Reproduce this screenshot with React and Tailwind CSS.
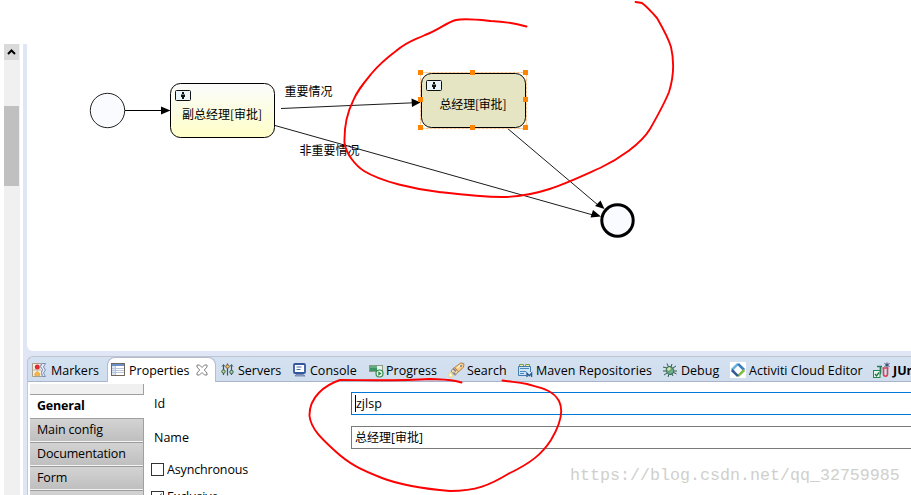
const UI = "font-['Open_Sans','Noto_Sans_CJK_SC',sans-serif]";
const CJK = "'Noto Sans CJK SC', sans-serif";

function MarkersIcon() {
  return (
    <svg width="16" height="16" viewBox="0 0 16 16" className="shrink-0">
      <path d="M1.500 1.500h9l-1 3 2 3-1 3 1 4h-10z" fill="#f6f0e6" stroke="#a9a08c" />
      <path d="M11 1.500h3.500l-2 3.500 2 3-2 3 2 3.500h-3l-1-4 1-3-2-3z" fill="#e3ebf7" stroke="#7b8fb8" />
      <path d="M1.500 8h8.500" stroke="#b9b09c" />
      <circle cx="6.300" cy="5" r="2.500" fill="#e02a34" />
      <path d="M3.800 13.500v-2l2.500-2.300 2.500 2.300v2z" fill="#f7b544" stroke="#d99a35" strokeWidth=".6" />
    </svg>
  );
}
function PropertiesIcon() {
  return (
    <svg width="16" height="16" viewBox="0 0 16 16" className="shrink-0">
      <rect x="1.500" y="1.500" width="13" height="12" fill="#fff" stroke="#71675a" />
      <rect x="2" y="2" width="12" height="2" fill="#6a8fc8" />
      <rect x="2" y="4" width="4" height="9" fill="#dbe6f4" />
      <path d="M2 6.500h12M2 8.500h12M2 10.500h12M5.500 4v9" stroke="#b9c6da" />
    </svg>
  );
}
function CloseIcon() {
  return (
    <svg width="12" height="12" viewBox="0 0 12 12" className="shrink-0">
      <path d="M1 1h2.500L6 3.500 8.500 1H11v2L8.300 6 11 9v2H8.500L6 8.500 3.500 11H1V9l2.700-3L1 3z" fill="#fff" stroke="#737373" strokeWidth=".9" />
    </svg>
  );
}
function ServersIcon() {
  return (
    <svg width="16" height="16" viewBox="0 0 16 16" className="shrink-0">
      <path d="M3.500 3v10M7.500 1.500v12M11.500 3v10" stroke="#3b5062" strokeWidth="1.200" />
      <circle cx="3.500" cy="9.500" r="1.700" fill="#c4d977" stroke="#38614f" />
      <circle cx="7.500" cy="4.500" r="1.700" fill="#f4cf72" stroke="#795d30" />
      <circle cx="11.500" cy="10" r="1.700" fill="#a8dbb0" stroke="#38614f" />
      <path d="M2 4.500l1.500-2L5 4.500M10 4.500l1.500-2L13 4.500" fill="none" stroke="#4f6478" />
    </svg>
  );
}
function ConsoleIcon() {
  return (
    <svg width="16" height="16" viewBox="0 0 16 16" className="shrink-0">
      <rect x="2" y="2" width="11" height="9" rx="1" fill="#fff" stroke="#34569c" strokeWidth="1.800" />
      <path d="M4.500 5h5M4.500 7.500h4" stroke="#4968a8" />
      <path d="M4 12.500h7l2 1.500H3z" fill="#9baacb" stroke="#596e9e" strokeWidth=".7" />
    </svg>
  );
}
function ProgressIcon() {
  return (
    <svg width="16" height="16" viewBox="0 0 16 16" className="shrink-0">
      <rect x="1.500" y="3.500" width="13" height="6" fill="#e9f2e8" stroke="#8c9a88" />
      <rect x="2" y="4" width="7" height="5" fill="#3d9465" />
      <path d="M2 5h7" stroke="#83c79e" />
      <circle cx="11.500" cy="11.500" r="3.500" fill="#e6f6e5" stroke="#2f8a4e" strokeWidth="1.200" />
      <path d="M10.300 9.300l3.200 2.200-3.200 2.200z" fill="#2b8448" />
    </svg>
  );
}
function SearchIcon() {
  return (
    <svg width="17" height="16" viewBox="0 0 17 16" className="shrink-0">
      <path d="M2 10l3 4-3 1.500L.500 13z" fill="#fffbd2" stroke="#e8cb62" strokeWidth=".7" />
      <path d="M3 9l3-3.500 4.500 4-3.500 4z" fill="#f1dfa9" stroke="#8b7861" strokeWidth=".8" />
      <path d="M5 6.500l3 3M5.500 10.500l2 2" stroke="#807f92" strokeWidth="1.600" />
      <path d="M6.500 5.500L13 .800l3 1-.5 3.500-5 4.500z" fill="#f8cb88" stroke="#a57138" strokeWidth=".8" />
      <path d="M9 6l4-3.200" stroke="#fff0bd" strokeWidth="1.500" />
      <circle cx="13" cy="4" r=".9" fill="#5479b4" />
    </svg>
  );
}
function MavenIcon() {
  return (
    <svg width="16" height="16" viewBox="0 0 16 16" className="shrink-0">
      <path d="M2.500 4V2.500h4V4M8.500 4V2.500h4V4" fill="#f4e9a2" stroke="#7a9e52" />
      <path d="M1.500 4.500h12v9h-12z" fill="#cfe4f8" stroke="#417cae" />
      <path d="M3 6.500h9M3 9.500h6M3 11.500h4" stroke="#4a88bb" />
      <rect x="9" y="10" width="7" height="5" fill="#d7e7f5" />
      <path d="M10 15v-3.800l2.300 2.500 2.300-2.500V15" fill="none" stroke="#285a91" strokeWidth="1.400" />
    </svg>
  );
}
function DebugIcon() {
  return (
    <svg width="16" height="16" viewBox="0 0 16 16" className="shrink-0">
      <path d="M1 5l4 1M5 1.500L6.500 5M10 2L9 5M14 4l-3 2M1 9h4M2 13l3-2M6 15l1-3M11 14l-1.500-2.500M15 9h-4M14.500 12L11 10" stroke="#315b50" strokeWidth="1" />
      <ellipse cx="8" cy="8.500" rx="3.600" ry="4" transform="rotate(-35 8 8.500)" fill="#75ad8c" stroke="#326752" />
      <circle cx="7" cy="7" r="1.800" fill="#d6e9a2" />
      <path d="M6 10.500l4-4" stroke="#387966" strokeWidth=".7" />
    </svg>
  );
}
function ActivitiIcon() {
  return (
    <svg width="16" height="16" viewBox="0 0 16 16" className="shrink-0">
      <rect width="16" height="16" fill="#fff" />
      <path d="M1.800 8L8 1.800" stroke="#69b2dc" strokeWidth="2.500" />
      <path d="M8 1.800L14.200 8" stroke="#397dbb" strokeWidth="2.500" />
      <path d="M14.200 8L8 14.200" stroke="#83bc49" strokeWidth="2.500" />
      <path d="M8 14.200L1.800 8" stroke="#315a98" strokeWidth="2.500" />
    </svg>
  );
}
function JUnitIcon() {
  return (
    <svg width="17" height="17" viewBox="0 0 17 17" className="shrink-0">
      <path d="M4 4.500h5M7.500 4v6q0 2-1.500 2" fill="none" stroke="#267a57" strokeWidth="1.700" />
      <path d="M10.500 6v6q0 2.200 2 2.200t2-2.200V6M9.500 6h6" fill="none" stroke="#d84257" strokeWidth="1.600" />
      <path d="M14 .500v5M11.500 1.500l5 3M16.500 1.500l-5 3" stroke="#384769" />
      <rect x=".5" y="8.500" width="6.500" height="7" fill="#e8f7e9" stroke="#268654" />
      <path d="M2 12l1.500 2L6 10.500" fill="none" stroke="#1b7b46" strokeWidth="1.300" />
    </svg>
  );
}

const tabs = [
  { icon: <ServersIcon />, label: "Servers", box: "w-[72px]", text: "ml-[2px]" },
  { icon: <ConsoleIcon />, label: "Console", box: "w-[76px]", text: "ml-[2px]" },
  { icon: <ProgressIcon />, label: "Progress", box: "w-[80px]", text: "ml-[2px]" },
  { icon: <SearchIcon />, label: "Search", box: "w-[69px]", text: "ml-[2px]" },
  { icon: <MavenIcon />, label: "Maven Repositories", box: "w-[145px]", text: "ml-[3px] tracking-[0.08px]" },
  { icon: <DebugIcon />, label: "Debug", box: "w-[68px]", text: "ml-[3px]" },
  { icon: <ActivitiIcon />, label: "Activiti Cloud Editor", box: "w-[143px]", text: "ml-[3px]" },
];

function Label({ children, className = "" }) {
  return <span className={`whitespace-nowrap text-[12.5px] leading-[18px] ${className}`}>{children}</span>;
}

function UserBadge({ x, y }) {
  return (
    <g transform={`translate(${x} ${y})`}>
      <rect x=".5" y=".5" width="15" height="10" rx="1" fill="#e9f4fb" stroke="#111" />
      <rect x="7" y="2" width="2" height="2" fill="#111" />
      <path d="M6 4.500h4V7H9v2H7V7H6z" fill="#111" />
    </g>
  );
}

function Diagram() {
  const handles = [[421, 72.500], [473, 72.500], [526, 72.500], [421, 99.500], [526, 99.500], [421, 127.500], [473, 127.500], [526, 127.500]];
  return (
    <svg width="884" height="351" viewBox="27 0 884 351" className="block">
      <defs>
        <linearGradient id="task" x1="0" y1="0" x2="0" y2="1">
          <stop offset="0" stopColor="#fafbfc" />
          <stop offset="1" stopColor="#ffffc8" />
        </linearGradient>
      </defs>
      <g stroke="#000" strokeWidth="1" fill="none">
        <path d="M125 110.500H162" />
        <path d="M281 108.500L413 102.800" strokeWidth=".9" />
        <path d="M275 125.500L593 215" strokeWidth=".9" />
        <path d="M507 128L598 205" strokeWidth=".9" />
      </g>
      <path d="M161 106.500l9.500 4-9.500 4zM411.500 98.500l9 4-8.500 4.500zM593 210l8 6.500-10.500 1zM600.500 200.500l4 8.500-9.500-3z" fill="#000" />
      <circle cx="107.500" cy="110.500" r="17.200" fill="#f9fbfe" stroke="#222" />
      <rect x="170.500" y="83.500" width="104" height="54" rx="10" fill="url(#task)" stroke="#000" />
      <UserBadge x={175} y={90} />
      <rect x="420.500" y="72.500" width="106" height="56" fill="none" stroke="#ffc48c" strokeDasharray="3 1" />
      <rect x="421.500" y="73.500" width="104" height="54" rx="10" fill="#e5e5c3" stroke="#000" />
      <UserBadge x={426} y={80} />
      {handles.map(([x, y]) => <rect key={`${x}-${y}`} x={x - 3} y={y - 2.500} width="5" height="5" fill="#ff8500" />)}
      <circle cx="617.500" cy="220.500" r="15.700" fill="#f9fbfe" stroke="#000" strokeWidth="3" />
      <g fontSize="12" fill="#000" style={{ fontFamily: CJK }}>
        <text x="182" y="119" textLength="80">副总经理[审批]</text>
        <text x="439.500" y="109" textLength="67">总经理[审批]</text>
        <text x="284.500" y="96">重要情况</text>
        <text x="299.500" y="155">非重要情况</text>
      </g>
    </svg>
  );
}

function SideItem({ children }) {
  return (
    <div className="flex h-6 items-center border-b border-[#9b9b9b] bg-linear-to-b from-[#d3d3d3] to-[#bebebe] pl-[7px] pb-px shadow-[inset_0_-1px_0_#f5f5f5]">
      <Label className="tracking-[-0.15px]">{children}</Label>
    </div>
  );
}

export default function App() {
  return (
    <div className={`relative flex h-[495px] w-[911px] overflow-hidden bg-white text-black ${UI}`}>
      <div className="flex w-[27px] shrink-0 pl-1 pt-11">
        <div className="mr-[3px] w-4 bg-[#f0f0f0]">
          <div className="flex h-4 w-[15px] items-center justify-center bg-[#dadada]">
            <svg width="9" height="7" viewBox="0 0 9 7"><path d="M1 5l3.500-3.500L8 5" fill="none" stroke="#000" strokeWidth="2" /></svg>
          </div>
          <div className="mt-[46px] h-20 w-[15px] bg-[#c0c0c0]" />
        </div>
        <div className="w-1 bg-[#e1e6f6]" />
      </div>

      <div className="flex min-w-0 flex-1 flex-col">
        <div className="bg-[#e1e6f6] pb-[5px]">
          <div className="h-[351px] overflow-hidden rounded-bl-md bg-white"><Diagram /></div>
        </div>

        <div className="bg-[#e1e6f6]">
          <div className="flex h-[26px] overflow-hidden rounded-tl-md border-l border-t border-[#c0c4ce] bg-linear-to-b from-[#d3e1f0] to-[#cfdded]">
            <div className="flex w-[79px] shrink-0 items-center border-b border-[#a9b3cb] pl-[3px] pt-[2px]">
              <MarkersIcon />
              <Label className="ml-1 pt-[2px]">Markers</Label>
            </div>
            <div className="flex w-[109px] shrink-0 items-center rounded-t-lg border-x border-t border-[#b4bccd] bg-white pl-[2px]">
              <PropertiesIcon />
              <Label className="ml-[3px] w-[67px] pt-[2px]">Properties</Label>
              <CloseIcon />
            </div>
            <div className="flex flex-1 items-center border-b border-[#a9b3cb] pl-[4px] pt-[2px]">
              {tabs.map((t) => (
                <div key={t.label} className={`flex shrink-0 items-center ${t.box}`}>
                  {t.icon}
                  <Label className={`pt-[2px] ${t.text}`}>{t.label}</Label>
                </div>
              ))}
              <JUnitIcon />
              <Label className="ml-[3px] pt-[2px] font-bold">JUnit</Label>
            </div>
          </div>
        </div>

        <div className="flex h-[113px] border-l border-[#c0c8dc] bg-white pl-[2px] pt-[2px]">
          <div className="w-[114px] shrink-0 overflow-hidden">
            <div className="h-[11px] border-b border-r border-[#a0a0a0] bg-[#f0f0f0]" />
            <div className="flex h-6 items-center border-b border-[#a0a0a0] bg-white pl-[7px] pb-[2px]">
              <Label className="font-bold tracking-[-0.2px]">General</Label>
            </div>
            <div className="border-r border-[#a0a0a0]">
              <SideItem>Main config</SideItem>
              <SideItem>Documentation</SideItem>
              <SideItem>Form</SideItem>
              <SideItem> </SideItem>
            </div>
          </div>
          <div className="min-w-0 flex-1 overflow-hidden pl-[7px] pt-[8px]">
            <div className="flex h-[23px] items-center">
              <div className="flex w-[200px] shrink-0 pl-[3px]"><Label>Id</Label></div>
              <div className="flex h-[23px] flex-1 items-center border-y border-l border-[#0078d7] pl-[3px]">
                <span className="h-[17px] w-px bg-black" />
                <Label>zjlsp</Label>
              </div>
            </div>
            <div className="mt-[11px] flex h-[23px] items-center">
              <div className="flex w-[200px] shrink-0 pl-[3px]"><Label>Name</Label></div>
              <div className="flex h-[23px] flex-1 items-center border-y border-l border-[#7a7a7a] pl-[3px] pt-px">
                <Label className="text-[12px]!">总经理[审批]</Label>
              </div>
            </div>
            <div className="mt-[11px] flex h-[19px] items-center">
              <span className="h-[13px] w-[13px] border border-[#333]" />
              <Label className="ml-[3px] tracking-[-0.15px]">Asynchronous</Label>
            </div>
            <div className="mt-[9px] flex h-[19px] items-center">
              <span className="flex h-[13px] w-[13px] items-center justify-center border border-[#333]">
                <svg width="11" height="11" viewBox="0 0 11 11"><path d="M1.500 5.500l3 3 5-7" fill="none" stroke="#333" /></svg>
              </span>
              <Label className="ml-[3px] pb-px tracking-[-0.15px]">Exclusive</Label>
            </div>
          </div>
        </div>
      </div>

      <svg className="pointer-events-none absolute inset-0" width="911" height="495" viewBox="0 0 911 495">
        <g fill="none" stroke="#ff0000" strokeWidth="1.900" strokeLinecap="round" strokeLinejoin="round">
          <path d="M526.500 26.500C514 23 503 21.500 491 21C477 19.500 465 18 456 20C447 22 439 30 425 35C412 41 408 41 396 51C384 60 377 67 372 73C363 84 357 91 353 101C348 111 344 125 344.500 143C346 154 356 166 364 171C382 182 414 189 439 192C460 194.500 480 197 502 197C540 197 571 181 600 168C619 159 641 144 650 129C658 115 665 102 669 92C674 76 674 60 671 47C668 37 661 25 657 18C650 10 646 6 642 3L635.500 2" />
          <path d="M461.500 382.500C451 379 442 379.500 430 379C398 381 362 380 340 380C325 385 309 397 309.500 416C311 429 322 439 334 450C350 465 362 470 382 478C403 486 425 489 450 491C476 491 490 485 508 474C531 463 542 454 551 440C560 425 564 411 559 401C552 388 535 387 527 384C517 382 511 382 502.500 380.500" />
        </g>
      </svg>
      <span className="absolute left-[570px] top-[465px] whitespace-nowrap font-['Liberation_Mono',monospace] text-[16.660px] leading-[22px] text-[#d0d0cb]">https://blog.csdn.net/qq_32759985</span>
    </div>
  );
}
